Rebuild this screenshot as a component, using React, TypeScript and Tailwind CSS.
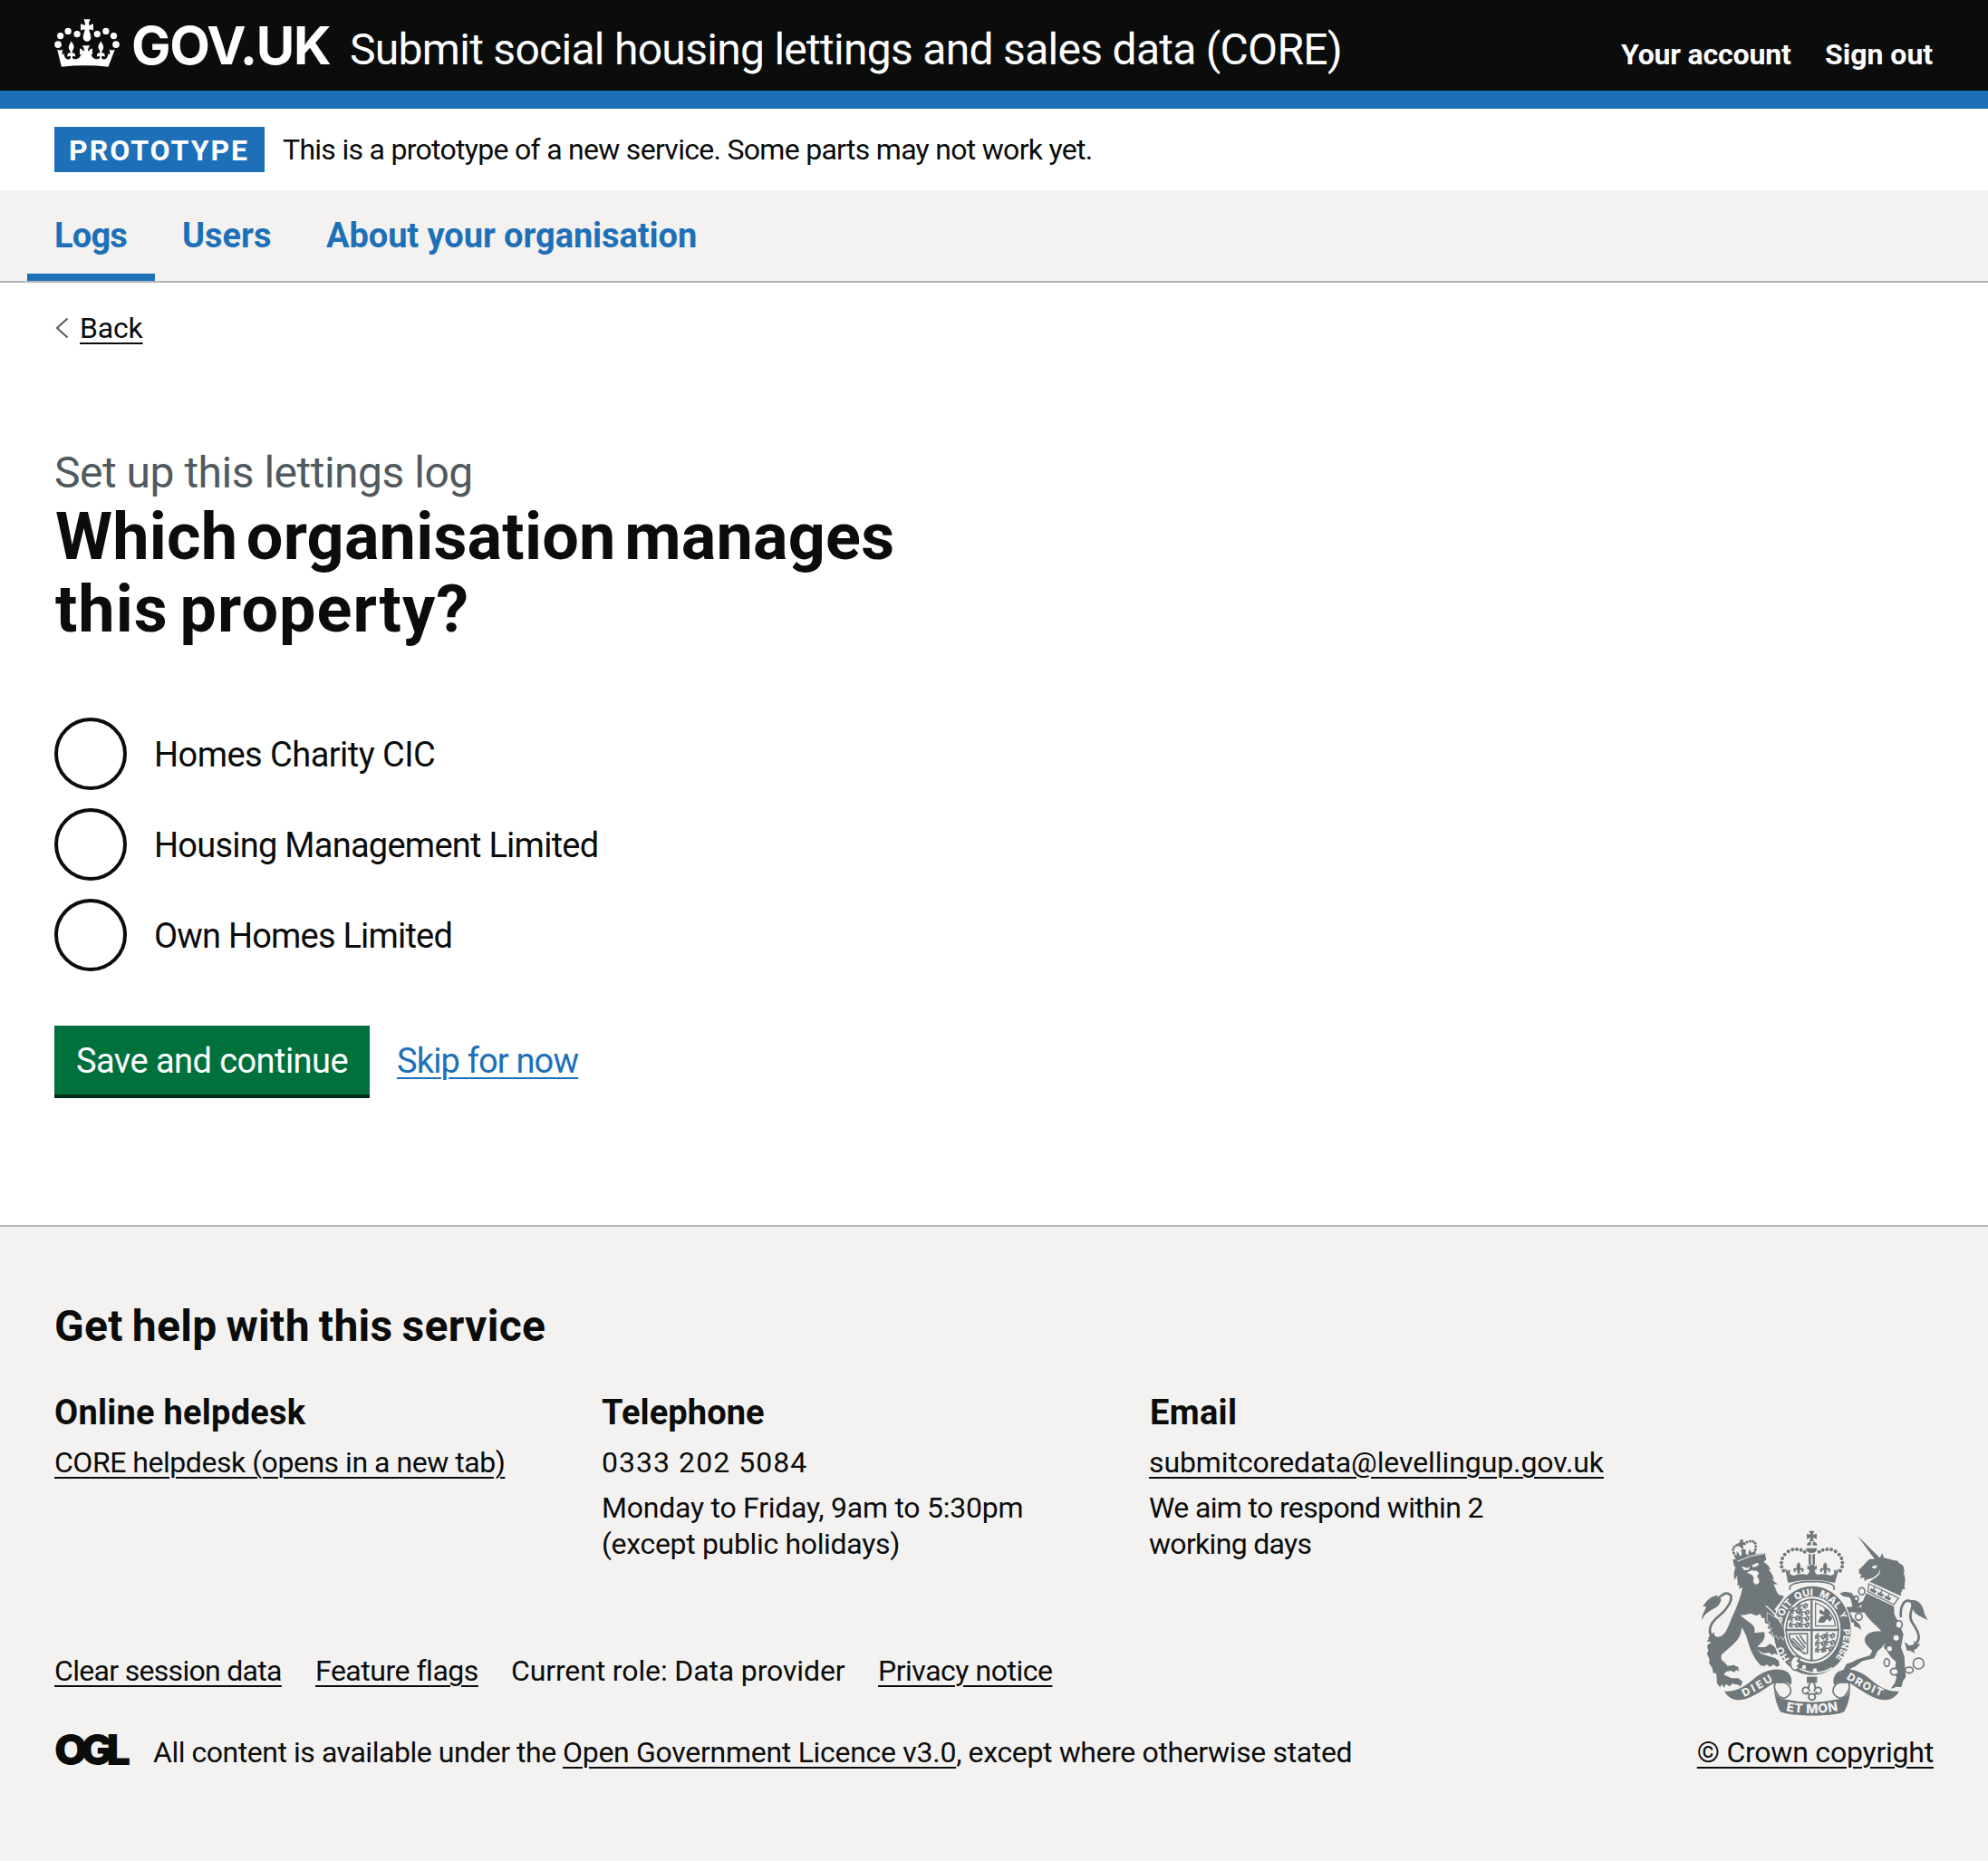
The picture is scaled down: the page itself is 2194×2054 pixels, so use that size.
const link = "underline decoration-2 underline-offset-[5px]";

function Crown() {
  return (
    <svg viewBox="60 63 216 160" width="72" height="53" fill="#fff" className="mt-px shrink-0 self-start" aria-hidden="true">
      <circle cx="71.500" cy="148" r="11.500" />
      <circle cx="79.500" cy="119" r="11" />
      <circle cx="105" cy="103.500" r="11" />
      <circle cx="135" cy="113" r="11" />
      <circle cx="202" cy="113" r="11" />
      <circle cx="231" cy="103.500" r="11" />
      <circle cx="257" cy="119" r="11" />
      <circle cx="264.500" cy="148" r="11.500" />
      <path d="M157 64h22c-3 6-5 12-5 19 5 0 10-2 15-4v22c-5-2-9-3-14-3 1 9 6 16 6 27a13 13 0 0 1-26 0c0-11 5-18 6-27-5 0-9 1-14 3V79c5 2 10 4 15 4 0-7-2-13-5-19z" />
      <path
        transform="translate(0 -19.7) scale(1 1.12)"
        d="M69 164q10 5 19 0-5 8-2 16l5-4c1 12 9 20 19 17 5-2 5-8 0-9-3 0-5 1-6 3-4-8 1-14 9-12l-1-6c-7-8-6-15-1-22l5-7 5 7c5 7 5 14-2 22l0 6c8-2 12 4 9 12-2-3-4-3-6-3-5 2-3 9 4 9 11 2 20-5 23-16l-5 4v-20q5 1 14 9c2-6-1-11-6-17h26c-5 6-8 11-6 17q9-8 14-9v20l-5-4c3 11 12 18 23 16 7 0 9-7 4-9-2 0-4 0-6 3-3-8 1-14 9-12v-6c-7-8-7-15-2-22l5-7 5 7c5 7 6 14-1 22l-1 6c8-2 13 4 9 12-1-2-3-3-6-3-5 1-5 7 0 9 10 3 18-5 19-17l5 4q3-8-2-16 9 5 19 0l-22 52q-78-8-156 0z"
      />
    </svg>
  );
}

function Fleur({ x, y, s = 1 }: { x: number; y: number; s?: number }) {
  return (
    <path
      transform={`translate(${x} ${y}) scale(${s})`}
      d="M0-22c8 9 10 17 2 27 4-10 16-10 16 0 0 6-5 8-9 5 4 0 3-6-1-6-4 1-4 7-3 13h-10c1-6 1-12-3-13-4 0-5 6-1 6-4 3-9 1-9-5 0-10 12-10 16 0-8-10-6-18 2-27z"
    />
  );
}

function Walker({ x, y }: { x: number; y: number }) {
  return (
    <path
      transform={`translate(${x} ${y})`}
      d="M0 2l5-4 6 3 13-1 5-5 6 3-3 5 4 4m-9-5l-1 7h5M11 2l-2 7h5M24 2l-2 7M5-1l-1 8-4 2M33-3l4 3M9-1c-5-8 5-8 3-5"
      fill="none"
      stroke="#6f777b"
      strokeWidth="4.500"
    />
  );
}

function Crest() {
  const ink = "#6f777b";
  const paper = "#f3f2f1";
  const beads = [
    [386, 222], [380, 209], [379, 195], [382, 181], [390, 168], [402, 158], [416, 152], [430, 151], [444, 153], [456, 159],
    [574, 222], [580, 209], [581, 195], [578, 181], [570, 168], [558, 158], [544, 152], [530, 151], [516, 153], [504, 159],
  ];
  const smallBeads = [[221, 162], [219, 152], [223, 143], [231, 137], [240, 138], [257, 133], [265, 127], [275, 124], [285, 125], [292, 131], [294, 141], [293, 152]];
  return (
    <svg viewBox="115 88 750 618" width="250" height="206" fill={ink} aria-hidden="true">
      {/* lion */}
      <g>
        {smallBeads.map(([x, y]) => (
          <circle key={`${x}-${y}`} cx={x} cy={y} r="4.500" />
        ))}
        <path d="M240 120l14-2-3 9 8 1-1 9-7-2 2 12-8 1-2-12-7 2-1-8 8-2z" />
        <path d="M219 164l12 7 0-14 7 8 4 10 6-9-3-12 8-5 8 4 0 12 8 7 1-12 4-9 6 11 14-8-1 21q-32 2-61 15z" />
        <path d="M230 188q45-22 94-25l5 22-9 8c15 9 19 16 23 26l-8-1c12 11 16 21 19 34l-8-3c9 8 15 14 22 17l-15 1c8 12 8 24 17 34l18 5-10 17-22 27c14 11 26 31 34 58l-5 31-12-5-4 11-10-7-8 8-6-14-10-6 10-8-12-7 4-11-13-6 0-14-9-2-7-13-11 6-20-8-16 5-18 1c9 10 36 25 44 36 10 18-2 37-16 49 10 17 36 24 55 20l16-10 15 10 17 7 3 15-9-4-1 8-12-4-8 5-7-7-21 1-18-10-20-10c-14-19-17-42-34-66 0 24-9 38-24 53l-42 38c-3 13-1 18 8 23l12 14 20-3 15 7 2 14-9-5-5 8-13-5-15 3-7 9-13-5-9 13-3-10-11-3-2-14-12-19 2-11-9-22 5-5-4-20 12-9 22-5c21-13 27-29 37-51 20-50 39-84 46-127l-11 5 1-14-8 4c6-17-2-20 1-34l-10 15c-1-21-3-26 5-43l-5-1-5-25c7 1 10 0 16-5l-11-5z" />
        <path d="M262 430C270 470 282 505 310 535l12 3 8-6 12 8 10-8 12 8 9-5-3-15-12-9-20-6-25-8-20-19C310 465 330 450 322 425z" />
        <path d="M150 515l6 30 8 20 2 30 10 13 6-11 6 12 8-12 12 8 8-9 22 4 6 6 6-18-14-10-22 0-26-12-8-16z" />
        <path d="M233 191q42-22 90-26" fill="none" stroke={paper} strokeWidth="3" />
        <path d="M247 207l20 6 7-7-3 13-16 1zM281 204l19-9 5 6-11 8-10 1zM264 228l15-7 19 1 7 9-7 9c10 11 11 24-1 27-12 0-13-13-9-22l-8-10z" fill={paper} />
        <path d="M153 449c-21-28-10-55 21-79 28-23 47-56 35-69-18-14-37 11-45 19" fill="none" stroke={ink} strokeWidth="8" />
        <path d="M117 384c-5-17 15-34 11-45l-10 1c13-17 25-35 51-37l-3 12 14-1c-3 40-49 31-63 70zM156 425c-1 15 10 21 26 12l17-16c0 12-6 18-13 23l14-1c-11 13-25 11-38 15l13 8c-14 7-24 4-32-9l-12-1c5-3 8-6 6-13z" />
      </g>

      {/* unicorn */}
      <g>
        <path d="M630 105l76 75-13 11zM704 181l9-17 5 15 12 3 16 4 18 3 4 7 14 9 5 21-4-3 6 27-3 28 5 5-10-1-7 15 2 9-105-48c19-13 38-20 34-40-5 22-28 31-43 33l-8 6-1-13-14 3 5-13-8-2 0-14c12-8 22-25 34-34z" />
        <path d="M678 208l18-5-4 12-10-1z" fill={paper} />
        <path d="M660 296l92 44 1 27 16 30 14 35-8 44 11 30 3 50 2 18-9 12-6 21-17-1-10 5-8 1 13-18 6-19-5-17 3-35-16-14-14-22-10-10 4-16c-7 12-17 23-24 26l-12 25-39 9-23 18-13 5-8 9-20-1 12-22 20-5 22-2 35-18 10-15c-11-15-27-22-27-39 0-21 26-30 55-29-20-23-58-49-67-86z" />
        <path d="M690 478l-14 28-44 14-36 19" fill="none" stroke={ink} strokeWidth="10" />
        <path d="M656 317l-18 23-22 7c-5-15-3-24-11-36l-22-5-11-9 17-6 22 4 16 20 9 14 14-8z" />
        <path d="M665 350c-25-12-46-10-74-7l-8 13 5 19 18 19 13-1 1 12 13 5 10 9-3-16-11-12-14-12-9-20 17 1 51 0z" />
        <path d="M669 265l98 47-16 22-86-43z" fill={paper} stroke={ink} strokeWidth="4" />
        {[[683, 286, 25], [707, 298, 25], [731, 310, 25]].map(([x, y, r]) => (
          <path key={x} transform={`translate(${x} ${y}) rotate(${r})`} d="M-10 6l1-10 6 4 2-17 5 16 8-3-2 12z" />
        ))}
        {[[645, 290, 10, 12], [627, 314, 7, 8], [635, 374, 11, 12], [768, 400, 11, 13], [728, 526, 9, 13], [753, 556, 13, 11], [802, 551, 13, 10], [833, 529, 18, 18]].map(([x, y, rx, ry]) => (
          <ellipse key={`${x}-${y}`} cx={x} cy={y} rx={rx} ry={ry} fill={paper} stroke={ink} strokeWidth="5" />
        ))}
        <circle cx="759" cy="444" r="9" fill={paper} />
        <circle cx="737" cy="480" r="8" fill={paper} />
        <path d="M775 376c-5-35 11-65 33-52 17 12-15 42 4 69 24 35 33 57 2 82" fill="none" stroke={ink} strokeWidth="8" />
        <path d="M800 322c26-12 50 11 52 42l12 22c-19-12-42-16-49-35-3-12 0-20-15-29zM786 457l17 13 14-4 3-14 5 14 15-2-14 17-9 3 4 11-17-9-9 1z" />
      </g>

      {/* crown above the shield */}
      <g>
        {beads.map(([x, y]) => (
          <circle key={`${x}-${y}`} cx={x} cy={y} r="6" />
        ))}
        <path d="M470 90h18l-5 13 13-4v18l-13-5 3 12h-14l4-12-13 5V99l13 4zM463 138q2-12 14-13v13zM483 125q12 1 15 13h-15zM460 147h37q0 15-18 16-18 0-19-16zM469 167h8v34h-8zM482 167h8v34h-8z" />
        <path d="M391 213l9 10 8-6-1 14c5 7 16 9 22 3l24-1c7 5 14 1 17-5l2-9-7-2v-13l10 4-3-6h17l-3 6 10-4v13l-7 2 2 9c3 6 10 10 17 5l24 1c6 6 17 4 22-3l-1-14 8 6 9-10-14 49q-78-20-155 0z" />
        <Fleur x={436} y={215} s={0.950} />
        <Fleur x={524} y={215} s={0.950} />
        <path d="M408 286q-12-27 72-29 86 1 72 29" fill={paper} stroke={ink} strokeWidth="5" />
      </g>

      {/* garter */}
      <ellipse cx="481" cy="420" rx="132" ry="151" fill={paper} />
      <ellipse cx="481" cy="420" rx="128" ry="147" />
      <ellipse cx="481" cy="418" rx="94" ry="111" fill={paper} />
      <ellipse cx="481" cy="418" rx="89" ry="104" />
      <ellipse cx="481" cy="418" rx="84" ry="99" fill={paper} />
      <path d="M479 315v206M392 418h178" stroke={ink} strokeWidth="7" />
      {[[406, 353], [403, 376], [403, 399], [430, 336], [436, 358], [436, 378], [436, 399], [490, 438], [490, 460], [490, 482], [520, 435], [520, 457], [514, 478]].map(([x, y]) => (
        <Walker key={`${x}-${y}`} x={x} y={y} />
      ))}
      <path d="M492 328v77h66q-4-51-66-77z" fill="none" stroke={ink} strokeWidth="4" />
      <path d="M500 392l8-18 14-4-18-8 2-12 15 8 1-14 16 10 1 15 9 9-8 13-10-10-9 12-11 2z" />
      <path d="M404 431l61-1v65q-12 4-22-9-33-11-39-55zM416 445l37 38M428 439l30 38M440 435l20 30M410 450l35 36" fill="none" stroke={ink} strokeWidth="5" />
      <path id="garter-upper" d="M380 464A105 123 0 1 1 584 448" fill="none" />
      <path id="garter-right" d="M577 384A104 123 0 0 1 512 546" fill="none" />
      <path id="garter-left" d="M413 522A105 123 0 0 1 377 427" fill="none" />
      <g fill={paper} fontFamily="Inter, sans-serif" fontWeight="800" fontSize="33">
        <text><textPath href="#garter-upper" startOffset="68">SOIT</textPath></text>
        <text><textPath href="#garter-upper" startOffset="160">QUI</textPath></text>
        <text><textPath href="#garter-upper" startOffset="238">MAL</textPath></text>
        <text fontSize="28"><textPath href="#garter-upper" startOffset="328">Y</textPath></text>
        <text fontSize="31"><textPath href="#garter-right" startOffset="32">PENSE</textPath></text>
        <text><textPath href="#garter-left" startOffset="10">HO</textPath></text>
      </g>
      <path d="M405 524q76 60 143 18" fill="none" stroke={paper} strokeWidth="5" />
      <path d="M427 504c-22 8-22 39-5 48l17-8-7-7 9-8-10-9 9-8z" fill={paper} stroke={ink} strokeWidth="4" />
      <circle cx="454" cy="541" r="7" fill={paper} />
      <circle cx="490" cy="552" r="7" fill={paper} />
      <path d="M332 360l26 16 14 8 16 30 3 24-7 14-6-12-11 9-4-12-11 6-3-16-9-5 8-8-12-8 5-10-10-8z" stroke={paper} strokeWidth="2" />
      <path d="M327 338q34 26 52 58" stroke={paper} strokeWidth="4" fill="none" />

      {/* ribbon and motto */}
      <path d="M463 573h34v20h-34z" />
      <path
        d="M480 587c12 11 14 23 7 34 6-19 25-15 24 0-2 10-13 11-17 4l-5 8c5 8 0 17-9 17s-14-9-9-17l-5-8c-4 7-15 6-17-4-1-15 18-19 24 0-7-11-5-23 7-34zM464 630h32"
        fill={paper}
        stroke={ink}
        strokeWidth="5.500"
      />
      <path d="M190 621c40 2 65-13 100-43 31-26 74-38 107-22 14 9 20 32 13 44-8-6-14-10-27-8-17 3-30 2-40 8-35 24-68 46-102 50-22 1-39-9-51-29z" />
      <path d="M769 621c-40 2-65-13-100-43-31-26-69-38-102-22-14 9-20 32-13 44 8-6 14-10 27-8 17 3 25 2 35 8 35 24 68 46 102 50 22 1 39-9 51-29z" />
      <g fill={paper} stroke={ink} strokeWidth="5">
        <path d="M359 591c-8 20 0 30 14 48l15 5c12-4 24-14 22-26-1-15-14-27-29-26q-12 1-22-1z" />
        <path d="M601 591c8 20 0 30-14 48l-15 5c-12-4-24-14-22-26 1-15 14-27 29-26q12 1 22-1z" />
      </g>
      <path d="M355 612q8 35 40 36 85 18 165 0 36-1 48-36c-4 37-10 57-21 76-31 18-180 18-212 0-10-20-18-43-20-76z" />
      <g fill={paper} fontFamily="Inter, sans-serif" fontWeight="800">
        <path id="motto-left" d="M256 640Q300 619 357 583" fill="none" />
        <path id="motto-mid" d="M394 686Q480 702 570 685" fill="none" />
        <path id="motto-right" d="M593 579Q640 611 716 641" fill="none" />
        <text fontSize="36"><textPath href="#motto-left" textLength="110">DIEU</textPath></text>
        <text fontSize="42"><textPath href="#motto-mid" textLength="174">ET MON</textPath></text>
        <text fontSize="36"><textPath href="#motto-right" textLength="132">DROIT</textPath></text>
      </g>
    </svg>
  );
}

function Header() {
  return (
    <header className="flex h-[120px] items-baseline border-b-[20px] border-[#1d70b8] bg-[#0b0c0c] px-[60px] pt-5 text-white">
      <Crown />
      <span className="ml-[13px] w-[241px] font-['Inter'] text-[58px] leading-[60px] font-bold tracking-[-1.3px]">GOV.UK</span>
      <span className="text-[48px] leading-[60px] tracking-[-0.71px]">Submit social housing lettings and sales data (CORE)</span>
      <nav className="ml-auto flex items-baseline text-[32px] leading-[40px] font-bold">
        <a className="w-[225px] tracking-[-0.17px]">Your account</a>
        <a className="w-[120px]">Sign out</a>
      </nav>
    </header>
  );
}

function Radio({ label, spacing }: { label: string; spacing: string }) {
  return (
    <label className="flex h-20 items-center gap-[30px]">
      <span className="size-20 rounded-full border-4 border-[#0b0c0c] bg-white" />
      <span className={`pt-0.5 text-[38px] leading-[80px] ${spacing}`}>{label}</span>
    </label>
  );
}

export default function App() {
  return (
    <div className="flex h-[2054px] flex-col overflow-hidden bg-white font-['Roboto',sans-serif] whitespace-nowrap text-[#0b0c0c]">
      <Header />

      <div className="flex h-[90px] shrink-0 items-center gap-5 px-[60px] text-[32px]">
        <strong className="h-[50px] w-[232px] bg-[#1d70b8] pl-4 leading-[52px] tracking-[2px] text-white">PROTOTYPE</strong>
        <span className="leading-[50px] tracking-[-0.71px]">This is a prototype of a new service. Some parts may not work yet.</span>
      </div>

      <nav className="flex h-[102px] shrink-0 border-b-2 border-[#b1b4b6] bg-[#f3f2f1] px-[30px] text-[38px] leading-[101px] font-bold text-[#1d70b8]">
        <a className="h-[100px] w-[141px] border-b-8 border-[#1d70b8] pl-[30px] tracking-[-0.8px]">Logs</a>
        <a className="w-[159px] pl-[30px]">Users</a>
        <a className="pl-[30px] tracking-[-0.07px]">About your organisation</a>
      </nav>

      <main className="flex h-[1040px] shrink-0 flex-col px-[60px] pt-[30px]">
        <a className="flex h-10 items-center text-[32px] leading-[40px]">
          <svg width="16" height="24" viewBox="0 0 16 24" fill="none" stroke="#505a5f" strokeWidth="2" className="mr-3">
            <path d="M14.500 1.500L3 12l11.500 10.500" />
          </svg>
          <span className={`tracking-[-0.2px] ${link}`}>Back</span>
        </a>
        <span className="mt-[110px] text-[48px] leading-[60px] tracking-[-0.5px] text-[#505a5f]">Set up this lettings log</span>
        <h1 className="pt-px pl-px text-[72px] leading-[80px] font-bold">
          <span className="block tracking-[0.2px] [word-spacing:-8.5px]">Which organisation manages</span>
          <span className="block tracking-[1px] [word-spacing:-6px]">this property?</span>
        </h1>
        <div className="mt-[79px] flex flex-col gap-5">
          <Radio label="Homes Charity CIC" spacing="tracking-[-0.54px]" />
          <Radio label="Housing Management Limited" spacing="tracking-[-0.75px]" />
          <Radio label="Own Homes Limited" spacing="tracking-[-0.8px]" />
        </div>
        <div className="mt-[60px] flex gap-[30px] text-[38px] leading-[78px]">
          <button className="h-[80px] w-[348px] border-b-4 border-[#002d18] bg-[#00703c] pl-6 text-left leading-[78px] tracking-[-0.56px] text-white">
            Save and continue
          </button>
          <a className={`tracking-[-0.84px] text-[#1d70b8] ${link}`}>Skip for now</a>
        </div>
      </main>

      <footer className="flex flex-1 items-end border-t-2 border-[#b1b4b6] bg-[#f3f2f1] px-[60px] pb-[100px] text-[32px] leading-[40px]">
        <div className="flex-1">
          <h2 className="mb-10 text-[48px] leading-[60px] font-bold tracking-[0.3px] [word-spacing:-2.2px]">Get help with this service</h2>
          <div className="grid h-[190px] grid-cols-[604px_604px_1fr]">
            <div>
              <h3 className="mb-[10px] text-[38px] leading-[50px] font-bold tracking-[0.23px]">Online helpdesk</h3>
              <a className={`tracking-[-0.47px] ${link}`}>CORE helpdesk (opens in a new tab)</a>
            </div>
            <div>
              <h3 className="mb-[10px] text-[38px] leading-[50px] font-bold tracking-[0.09px]">Telephone</h3>
              <p className="mb-[10px] tracking-[1.05px]">0333 202 5084</p>
              <p className="tracking-[-0.24px]">Monday to Friday, 9am to 5:30pm</p>
              <p className="tracking-[-0.33px]">(except public holidays)</p>
            </div>
            <div>
              <h3 className="mb-[10px] pl-px text-[38px] leading-[50px] font-bold tracking-[0.33px]">Email</h3>
              <p className="mb-[10px]">
                <a className={`tracking-[-0.09px] ${link}`}>submitcoredata@levellingup.gov.uk</a>
              </p>
              <p className="tracking-[-0.64px]">We aim to respond within 2</p>
              <p className="tracking-[-0.69px]">working days</p>
            </div>
          </div>
          <div className="mt-[100px] flex">
            <div className="w-[288px]">
              <a className={`tracking-[-0.69px] ${link}`}>Clear session data</a>
            </div>
            <div className="w-[216px]">
              <a className={`tracking-[-0.48px] ${link}`}>Feature flags</a>
            </div>
            <div className="w-[405px] tracking-[-0.13px]">Current role: Data provider</div>
            <a className={`tracking-[-0.48px] ${link}`}>Privacy notice</a>
          </div>
          <div className="mt-[50px] flex items-start">
            <span className="h-10 w-[109px] font-['Inter'] text-[47px] leading-[34px] font-black tracking-[-7.2px]">OGL</span>
            <span className="w-[452px] tracking-[-0.46px]">All content is available under the</span>
            <a className={`tracking-[-0.29px] ${link}`}>Open Government Licence v3.0</a>
            <span className="tracking-[-0.37px]">, except where otherwise stated</span>
          </div>
        </div>
        <div className="flex flex-col items-center gap-[19px]">
          <Crest />
          <a className={`tracking-[-0.22px] ${link}`}>© Crown copyright</a>
        </div>
      </footer>
    </div>
  );
}
